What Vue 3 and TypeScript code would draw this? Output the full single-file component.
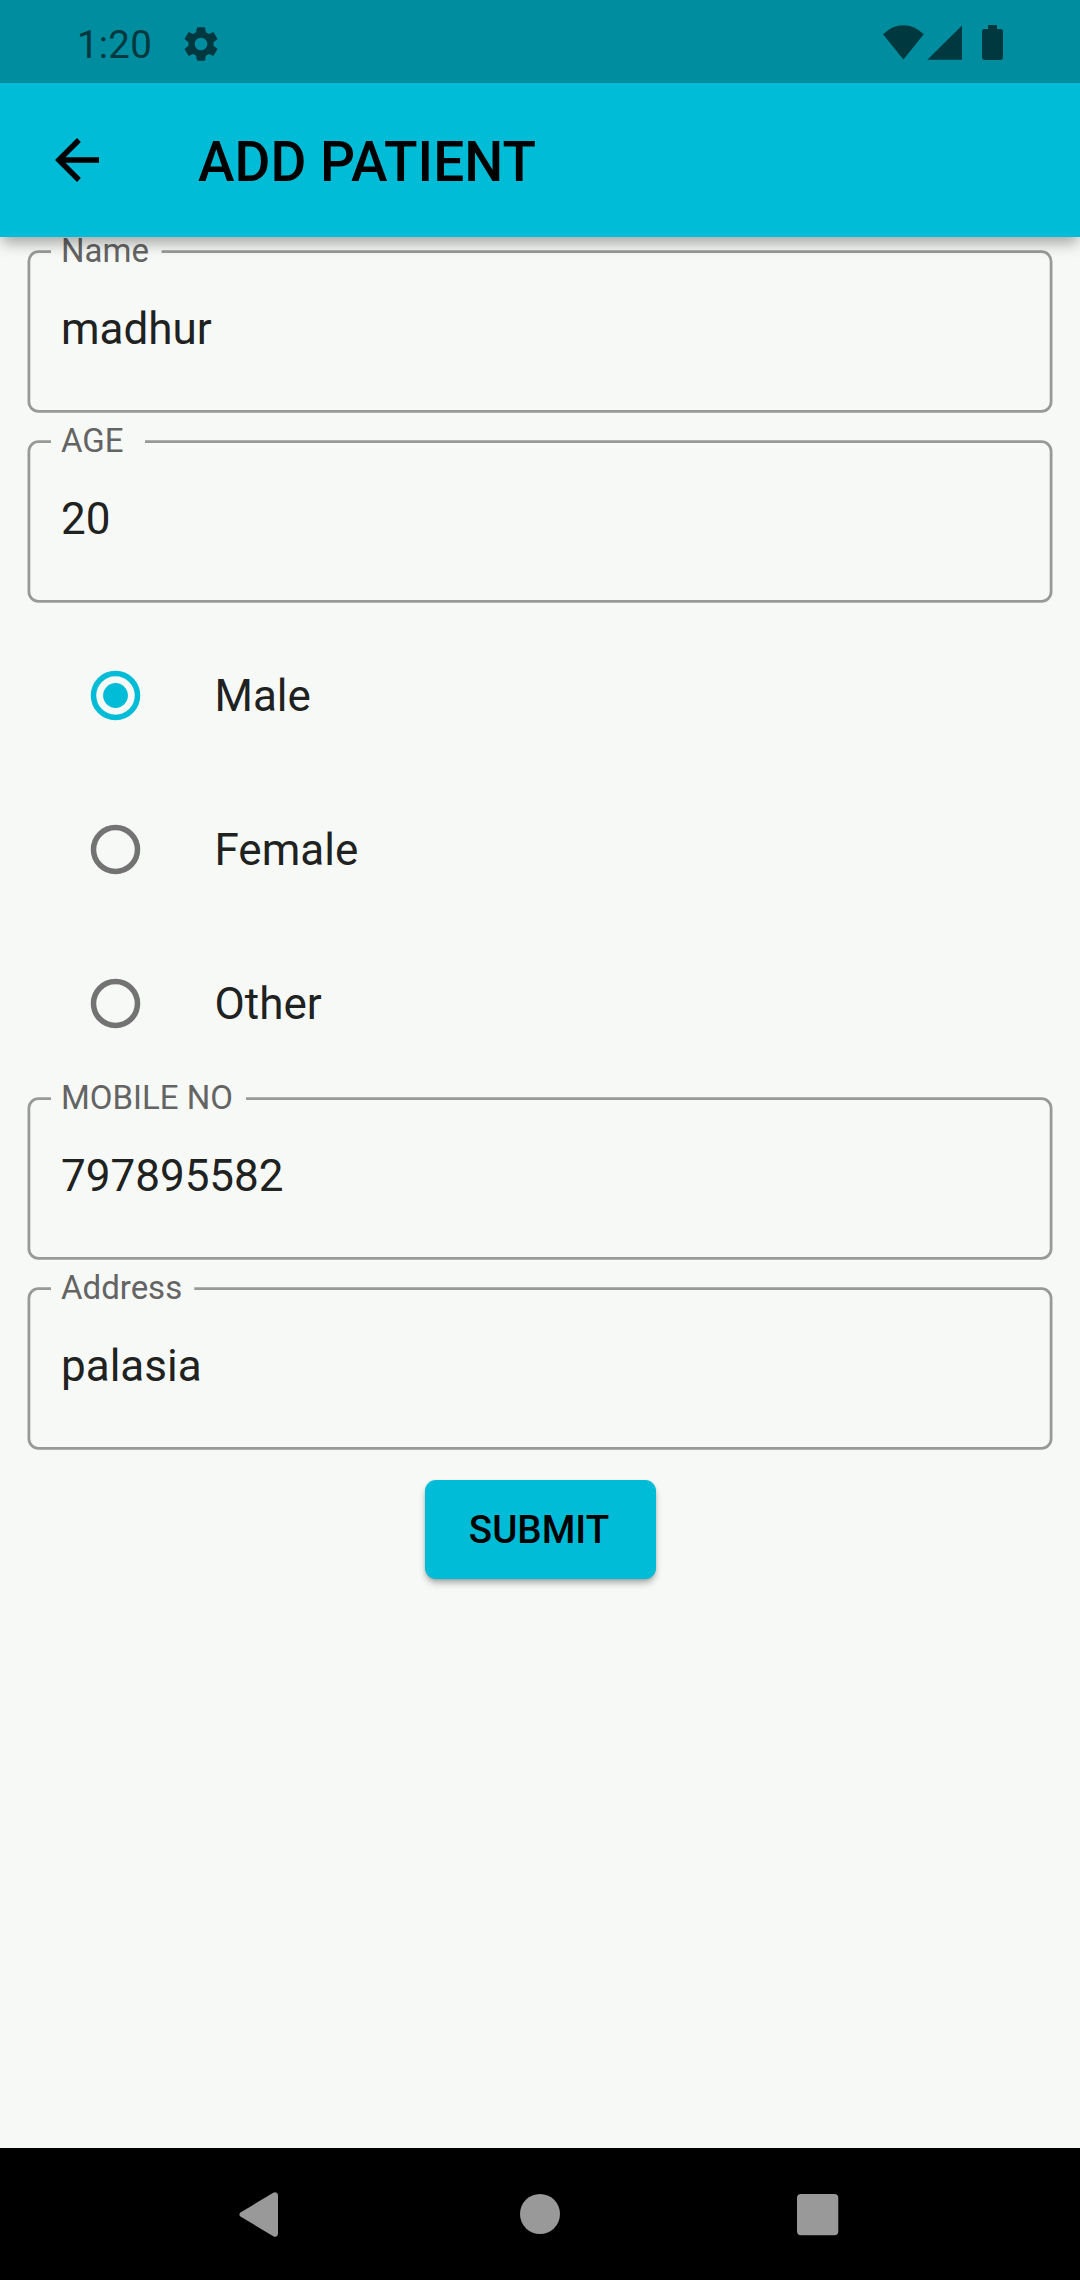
<script setup lang="ts">
import { ref } from 'vue'

interface Field {
  label: string
  value: string
  notchEnd: number
}

const personal: Field[] = [
  { label: 'Name', value: 'madhur', notchEnd: 161.6 },
  { label: 'AGE', value: '20', notchEnd: 145 },
]
const contact: Field[] = [
  { label: 'MOBILE NO', value: '797895582', notchEnd: 246 },
  { label: 'Address', value: 'palasia', notchEnd: 194.3 },
]
const genders: string[] = ['Male', 'Female', 'Other']
const gender = ref<string>('Male')

// Rounded outline that leaves a notch in the top edge for the label.
const outline = (end: number): string =>
  `M51 14.7H38.5a9.6 9.6 0 0 0-9.6 9.6V164.7a9.6 9.6 0 0 0 9.6 9.6H1041.5a9.6 9.6 0 0 0 9.6-9.6V24.3a9.6 9.6 0 0 0-9.6-9.6H${end}`
</script>

<template>
  <div class="screen">
    <header class="top">
      <div class="status">
        <span class="clock">1:20</span>
        <svg class="gear" width="42" height="42" viewBox="0 0 24 24">
          <path d="M19.14 12.94c.04-.3.06-.61.06-.94 0-.32-.02-.64-.07-.94l2.03-1.58a.49.49 0 0 0 .12-.61l-1.92-3.32a.488.488 0 0 0-.59-.22l-2.39.96c-.5-.38-1.03-.7-1.62-.94l-.36-2.54a.484.484 0 0 0-.48-.41h-3.84c-.24 0-.43.17-.47.41l-.36 2.54c-.59.24-1.13.57-1.62.94l-2.39-.96c-.22-.08-.47 0-.59.22L2.74 8.87c-.12.21-.08.47.12.61l2.03 1.58c-.05.3-.09.63-.09.94s.02.64.07.94l-2.03 1.58a.49.49 0 0 0-.12.61l1.92 3.32c.12.22.37.29.59.22l2.39-.96c.5.38 1.03.7 1.62.94l.36 2.54c.05.24.24.41.48.41h3.84c.24 0 .44-.17.47-.41l.36-2.54c.59-.24 1.13-.56 1.62-.94l2.39.96c.22.08.47 0 .59-.22l1.92-3.32c.12-.22.07-.47-.12-.61l-2.01-1.58zM12 15.6A3.61 3.61 0 0 1 8.4 12c0-1.98 1.62-3.6 3.6-3.6s3.6 1.62 3.6 3.6-1.62 3.6-3.6 3.6z" />
        </svg>
        <svg class="signals" width="124" height="40" viewBox="0 0 124 40">
          <path d="M3 11.3Q12 2.2 23.4 2.2T43.8 11.3L23.4 36.5Z" />
          <path d="M47.3 36.8L82 2.4V36.8Z" />
          <path d="M108 2h9v4h3.600q2.400 0 2.400 2.400v26.200q0 2.400-2.400 2.400h-16.200q-2.400 0-2.400-2.400v-26.200q0-2.400 2.400-2.400h3.600z" />
        </svg>
      </div>
      <div class="bar">
        <svg width="66" height="66" viewBox="0 0 24 24">
          <path d="M20 11H7.830l5.590-5.590L12 4l-8 8 8 8 1.410-1.410L7.830 13H20v-2z" />
        </svg>
        <h1>ADD PATIENT</h1>
      </div>
    </header>

    <main>
      <label v-for="f in personal" :key="f.label" class="field">
        <svg width="1080" height="190" viewBox="0 0 1080 190"><path :d="outline(f.notchEnd)" /></svg>
        <span class="text">
          <span class="caption">{{ f.label }}</span>
          <span class="value">{{ f.value }}</span>
        </span>
      </label>

      <div class="radios">
        <div v-for="g in genders" :key="g" class="radio" :class="{ on: g === gender }" @click="gender = g">
          <svg width="55" height="55" viewBox="0 0 55 55">
            <circle class="ring" cx="27.500" cy="27.500" r="22" />
            <circle v-if="g === gender" class="dot" cx="27.500" cy="27.500" r="12.400" />
          </svg>
          <span>{{ g }}</span>
        </div>
      </div>

      <label v-for="f in contact" :key="f.label" class="field">
        <svg width="1080" height="190" viewBox="0 0 1080 190"><path :d="outline(f.notchEnd)" /></svg>
        <span class="text">
          <span class="caption">{{ f.label }}</span>
          <span class="value">{{ f.value }}</span>
        </span>
      </label>

      <button type="button" class="submit">SUBMIT</button>
    </main>

    <nav>
      <svg width="1080" height="132" viewBox="0 0 1080 132">
        <path d="M240.800 64.200L273.300 44.800Q275 43.800 276.700 44.800Q278 45.700 278 47.500V85.500Q278 87.300 276.700 88.200Q275 89.200 273.300 88.200L240.800 68.800Q238 66.500 240.800 64.200Z" />
        <circle cx="540" cy="66" r="20" />
        <rect x="797" y="46" width="41.300" height="41.300" rx="4" />
      </svg>
    </nav>
  </div>
</template>

<style>
body {
  margin: 0;
}
</style>

<style scoped>
.screen {
  width: 1080px;
  height: 2280px;
  display: flex;
  flex-direction: column;
  overflow: hidden;
  background: #f7f9f6;
  font-family: Roboto, sans-serif;
  color: #202121;
}
svg {
  display: block;
  flex: none;
}
.top {
  position: relative;
  z-index: 1;
  flex: none;
  box-shadow: 0 8px 14px -2px rgba(0, 0, 0, 0.34);
}
.status {
  height: 83px;
  box-sizing: border-box;
  display: flex;
  align-items: flex-start;
  padding: 23px 76px 0 77px;
  background: #008da0;
  fill: #00383f;
  color: #00383f;
}
.clock {
  width: 103px;
  font-size: 38.5px;
  line-height: 44px;
  letter-spacing: 0.2px;
}
.gear {
  margin-top: -0.5px;
}
.signals {
  margin-left: auto;
}
.bar {
  height: 154px;
  display: flex;
  align-items: center;
  padding-left: 44px;
  background: #00bcd6;
}
h1 {
  margin: 4px 0 0 88px;
  font-size: 55px;
  font-weight: 500;
  line-height: 64px;
  color: #000;
}
main {
  flex: 1;
  display: flex;
  flex-direction: column;
}
.field {
  display: grid;
  height: 190px;
}
.field > * {
  grid-area: 1 / 1;
}
.field path {
  fill: none;
  stroke: #989a98;
  stroke-width: 2.75;
}
.text {
  display: flex;
  flex-direction: column;
  padding-left: 61px;
}
.caption {
  font-size: 33px;
  line-height: 28px;
  color: #636463;
}
.value {
  margin-top: 34px;
  font-size: 44px;
  line-height: 60px;
}
.radios {
  padding: 2px 0 3px;
}
.radio {
  height: 154px;
  display: flex;
  align-items: center;
  gap: 71.500px;
  padding-left: 88px;
  font-size: 44px;
  line-height: 60px;
}
.radio svg {
  margin-bottom: 1px;
}
.ring {
  fill: none;
  stroke: #727372;
  stroke-width: 5.5;
}
.on .ring {
  stroke: #00bcd6;
}
.dot {
  fill: #00bcd6;
}
.submit {
  align-self: center;
  margin-top: 16px;
  width: 231px;
  height: 99px;
  padding: 0 2px 0 0;
  border: 0;
  border-radius: 11px;
  background: #00bcd6;
  box-shadow: 0 5px 7px -1px rgba(0, 0, 0, 0.3), 0 1px 3px rgba(0, 0, 0, 0.12);
  font: 500 38.5px/44px Roboto, sans-serif;
  color: #000;
}
nav {
  flex: none;
  height: 132px;
  background: #000;
  fill: #999;
}
</style>
